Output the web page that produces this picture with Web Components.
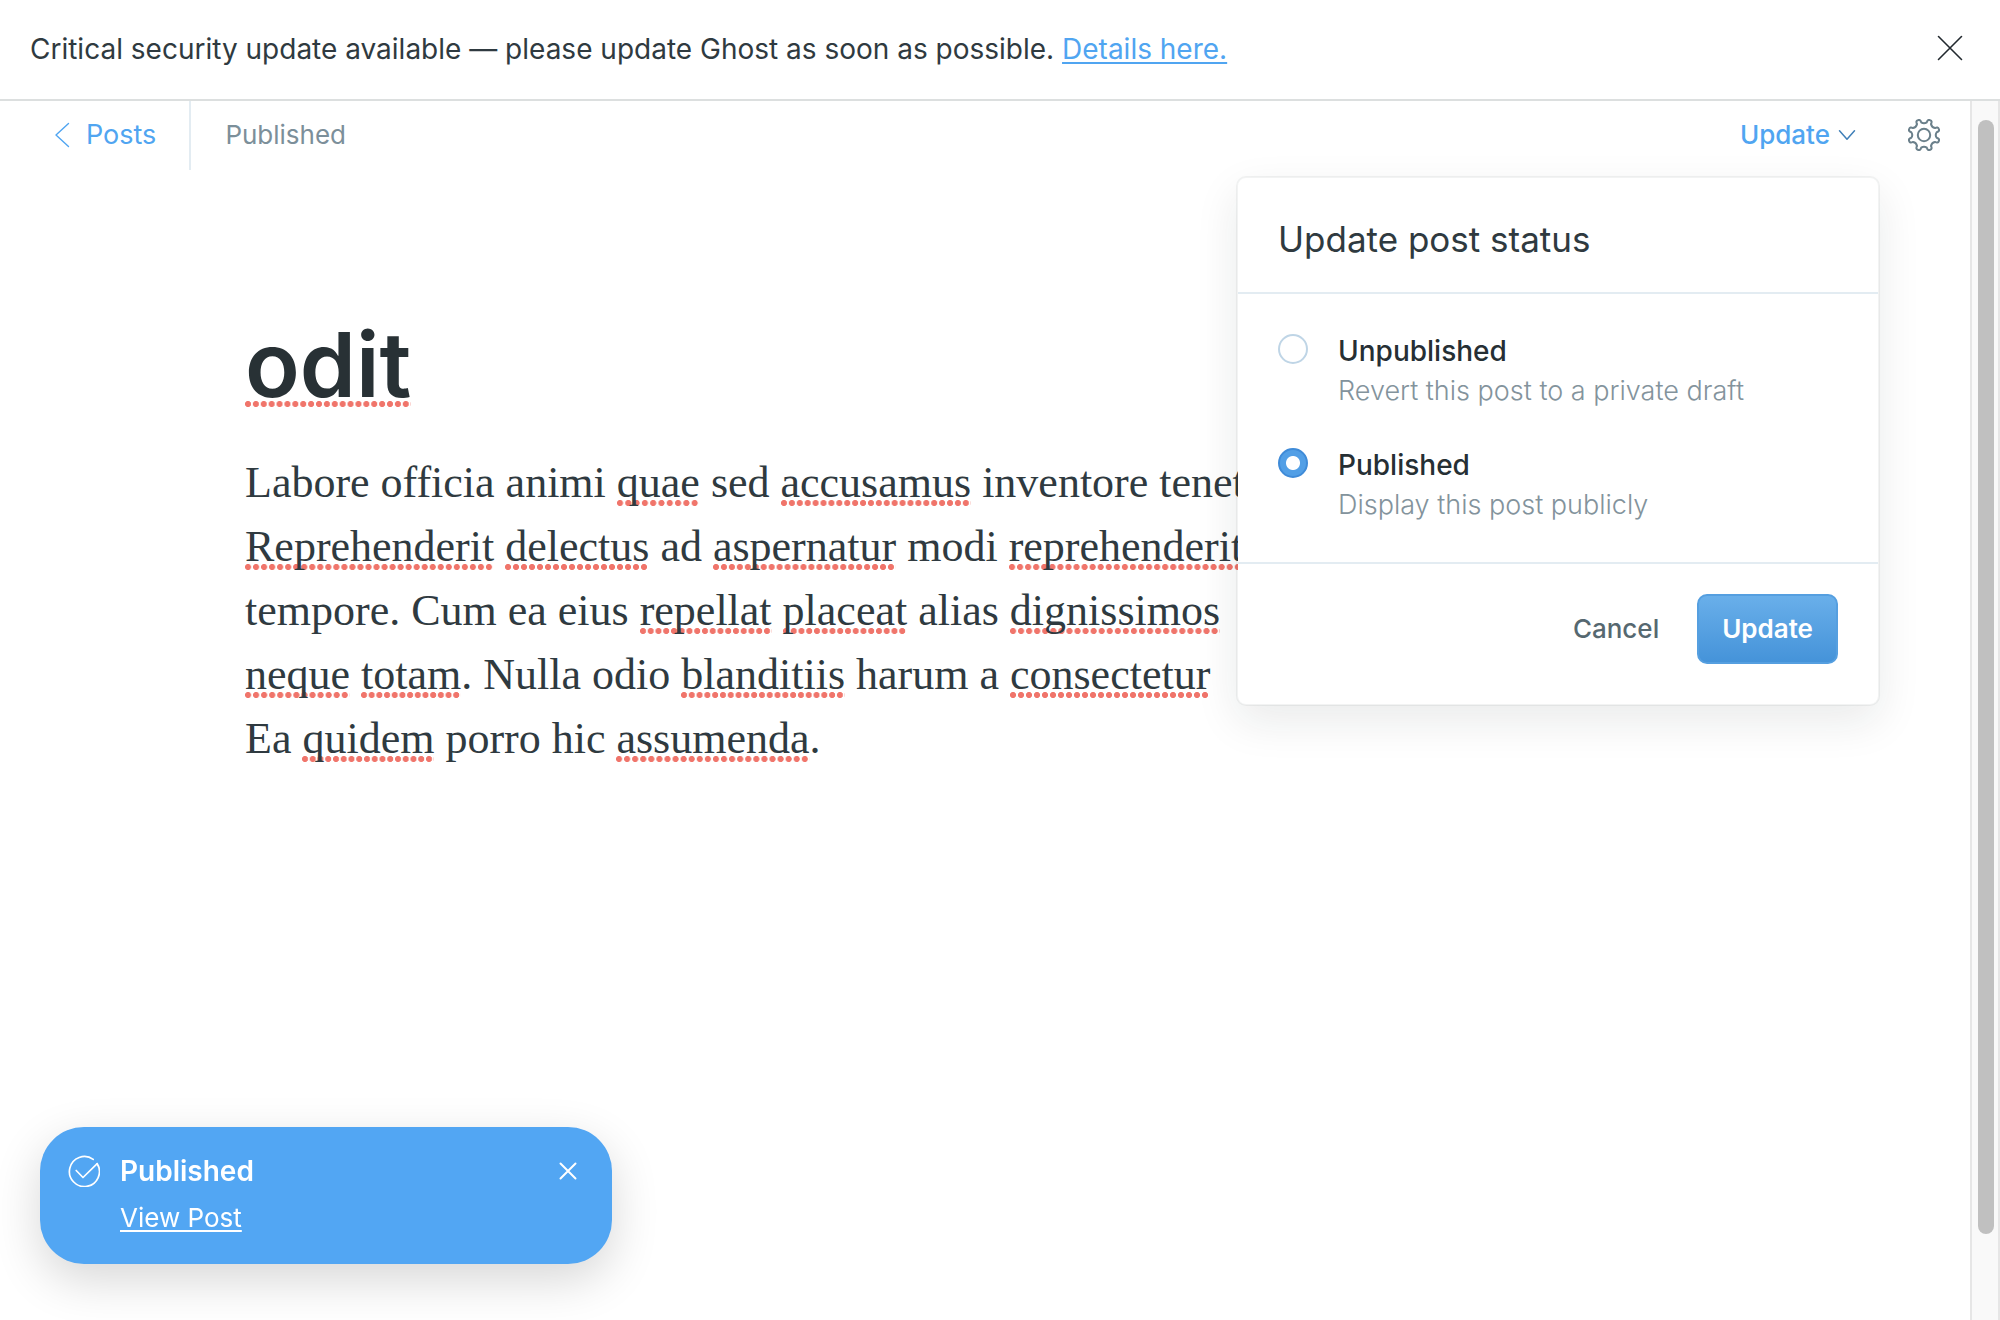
<!DOCTYPE html>
<html lang="en">
<head>
<meta charset="utf-8">
<title>Editor - Ghost</title>
<style>
  html, body { height: 100%; }
  body {
    margin: 0;
    overflow: hidden;
    background: #fff;
    color: #2f3a40;
    font-family: Inter, "Liberation Sans", sans-serif;
    font-size: 26px;
    line-height: 32px;
    --blue: #50a5f1;
    --rule: #e3ecf2;
  }
</style>
</head>
<body>
<ghost-app></ghost-app>

<script>
const define = (name, html, setup) => {
  const template = document.createElement('template');
  template.innerHTML = html.trim();
  customElements.define(name, class extends HTMLElement {
    constructor() {
      super();
      this.attachShadow({ mode: 'open' }).append(template.content.cloneNode(true));
      if (setup) setup(this);
    }
  });
};

define('update-banner', `
  <style>
    :host { display: flex; align-items: center; justify-content: space-between; flex: none; box-sizing: border-box;
      padding: 0 36px 2px 30px; height: 101px; border-bottom: 2px solid #dcdfdf; font-size: 28px; }
    p { margin: 0; }
    button { display: flex; padding: 0 0 2px; border: 0; background: none; color: #22292f; }
  </style>
  <p><slot></slot></p>
  <button type="button" aria-label="Dismiss"><svg width="28" height="28" viewBox="0 0 28 28" fill="none" stroke="currentColor" stroke-width="1.6" stroke-linecap="round"><path d="M2.500 2.500l23 23M25.500 2.500l-23 23"/></svg></button>
`);

define('scroll-rail', `
  <style>
    :host { display: flex; flex: none; box-sizing: border-box; width: 30px; padding: 19px 4px 86px 6px;
      background: #f9f9f9; border: solid #e6e6e6; border-width: 0 2px; }
    i { flex: 1; border-radius: 8px; background: #c0c0c0; }
  </style>
  <i></i>
`);

define('spell-mark', `<style>
    :host { display: inline;
      background: radial-gradient(circle at 3px 3px, #f0756b 2.7px, transparent 3.4px) left bottom var(--mark-offset, 1px) / 8px 6px round no-repeat; }
  </style><slot></slot>`);

define('status-menu', `
  <style>
    :host { display: block; box-sizing: border-box; width: 644px; background: #fff; background-clip: padding-box;
      border: 2px solid rgba(30, 50, 50, .06); border-radius: 10px; box-shadow: 0 16px 44px rgba(20, 30, 30, .09); }
    h2 { margin: 0; padding: 40px 40px 32px; font-size: 35px; line-height: 42px; font-weight: 400; border-bottom: 2px solid var(--rule); }
    fieldset { display: flex; flex-direction: column; gap: 34px; margin: 0; padding: 38px 40px 36px; border: 0; min-width: 0; }
    .option { display: grid; grid-template-columns: 30px 1fr; column-gap: 30px; }
    input { appearance: none; box-sizing: border-box; width: 30px; height: 30px; margin: 2px 0 0; border: 2px solid #bfd5e6; border-radius: 50%; background: #fff; }
    input:checked { border-color: #3f8bd8; background: radial-gradient(circle, #fff 6.5px, #529fe6 7.5px); }
    label { font-size: 28px; line-height: 38px; font-weight: 500; color: #262f34; }
    p { grid-column: 2; margin: 0; line-height: 42px; font-size: 27px; font-weight: 300; color: #83939c; }
    footer { display: flex; justify-content: flex-end; align-items: center; gap: 22px; padding: 30px 40px; padding-bottom: 40px; border-top: 2px solid var(--rule); }
    button { box-sizing: border-box; height: 70px; padding: 0 16px; border: 0; background: none; font: 500 26px/32px Inter, sans-serif; color: #566870; }
    .go { padding: 0 23px; border: 2px solid #559fe0; border-radius: 10px; color: #fff; font-weight: 600; background: linear-gradient(#69afea, #4593d9); }
  </style>
  <h2>Update post status</h2>
  <fieldset>
    <div class="option"><input type="radio" name="status" id="draft"><label for="draft">Unpublished</label><p>Revert this post to a private draft</p></div>
    <div class="option"><input type="radio" name="status" id="live" checked><label for="live">Published</label><p>Display this post publicly</p></div>
  </fieldset>
  <footer><button type="button">Cancel</button><button type="button" class="go">Update</button></footer>
`);

define('editor-header', `
  <style>
    :host { display: flex; align-items: stretch; flex: none; height: 69px; }
    a { display: flex; align-items: center; gap: 16px; padding: 0 33px 2px 54px; border-right: 2px solid var(--rule); color: var(--blue); font-size: 27px; text-decoration: none; }
    .state { display: flex; align-items: center; padding: 0 0 2px 34px; color: #7c8f9a; }
    .tools { display: flex; align-items: stretch; margin-left: auto; padding-right: 30px; }
    .menu { position: relative; display: flex; margin-right: 28px; }
    button { display: flex; align-items: center; gap: 8px; padding: 0 0 2px; border: 0; background: none; color: #6b808b; font: 500 26px/32px Inter, sans-serif; }
    .trigger { padding: 0 24px 2px 22px; color: var(--blue); }
    status-menu { position: absolute; top: calc(100% + 6px); right: 0; z-index: 2; }
  </style>
  <a href="#posts"><svg width="16" height="26" viewBox="0 0 16 26" fill="none" stroke="currentColor" stroke-width="1.4" stroke-linecap="round" stroke-linejoin="round"><path d="M14.500 1.500L2 13l12.500 11.500"/></svg>Posts</a>
  <span class="state">Published</span>
  <div class="tools">
    <div class="menu">
      <button type="button" class="trigger" aria-expanded="true">Update<svg width="18" height="12" viewBox="0 0 18 12" fill="none" stroke="#3f7fb8" stroke-width="1.5" stroke-linecap="round" stroke-linejoin="round"><path d="M1.500 1.800L9 10.300l7.500-8.500"/></svg></button>
      <status-menu></status-menu>
    </div>
    <button type="button" aria-label="Settings"><svg class="gear" width="32" height="32" viewBox="0 0 32 32" fill="none" stroke="currentColor" stroke-width="2" stroke-linejoin="round"><circle cx="16" cy="16" r="6.200"/><path/></svg></button>
  </div>
`, host => {
  // Eight rounded teeth, one every 45 degrees, joined by shallow valleys.
  const pt = (deg, r) => {
    const a = deg * Math.PI / 180;
    return (16 + r * Math.cos(a)).toFixed(2) + ' ' + (16 + r * Math.sin(a)).toFixed(2);
  };
  let d = '';
  for (let i = 0; i < 8; i++) {
    const t = 22.5 + i * 45;
    d += (i ? 'L' : 'M') + pt(t - 10, 13) + 'Q' + pt(t - 9, 16.4) + ' ' + pt(t, 16)
      + 'Q' + pt(t + 9, 16.4) + ' ' + pt(t + 10, 13)
      + 'Q' + pt(t + 22.5, 10.8) + ' ' + pt(t + 35, 13);
  }
  host.shadowRoot.querySelector('.gear path').setAttribute('d', d + 'Z');
});

define('post-canvas', `
  <style>
    :host { display: block; box-sizing: border-box; width: 100%; max-width: 1480px; margin: 0 auto; padding-top: 145px; white-space: nowrap; }
    h1 { margin: 0 0 36px; font-size: 90px; line-height: 100px; font-weight: 600; color: #283135; --mark-offset: 12px; }
    p { margin: 0; font: 44px/64px Georgia, "Liberation Serif", serif; }
  </style>
  <h1><spell-mark>odit</spell-mark></h1>
  <p>Labore officia animi <spell-mark>quae</spell-mark> sed <spell-mark>accusamus</spell-mark> inventore tenetur.<br>
  <spell-mark>Reprehenderit</spell-mark> <spell-mark>delectus</spell-mark> ad <spell-mark>aspernatur</spell-mark> modi <spell-mark>reprehenderit</spell-mark><br>
  tempore. Cum ea eius <spell-mark>repellat</spell-mark> <spell-mark>placeat</spell-mark> alias <spell-mark>dignissimos</spell-mark><br>
  <spell-mark>neque</spell-mark> <spell-mark>totam</spell-mark>. Nulla odio <spell-mark>blanditiis</spell-mark> harum a <spell-mark>consectetur</spell-mark><br>
  Ea <spell-mark>quidem</spell-mark> porro hic <spell-mark>assumenda</spell-mark>.</p>
`);

define('toast-note', `
  <style>
    :host { display: grid; grid-template-columns: 32px 1fr auto; column-gap: 20px; align-items: center; box-sizing: border-box;
      width: 572px; padding: 26px 34px 28px 28px; border-radius: 44px; background: #52a6f3; color: #fff; box-shadow: 0 16px 48px rgba(0, 0, 0, .16); }
    strong { font-size: 28px; line-height: 36px; font-weight: 600; }
    a { grid-column: 2; padding-top: 11px; line-height: 36px; color: inherit; text-decoration-thickness: 2px; text-underline-offset: 3px; }
    button { display: flex; padding: 0; border: 0; background: none; color: inherit; }
  </style>
  <svg width="32" height="32" viewBox="0 0 32 32" fill="none" stroke="currentColor" stroke-width="1.7" stroke-linecap="round" stroke-linejoin="round"><path d="M25.200 4.400A15 15 0 1 0 29.200 8.700"/><path d="M8.200 15.500l6.800 7L29.200 8.700"/></svg>
  <strong>Published</strong>
  <button type="button" aria-label="Close"><svg width="20" height="20" viewBox="0 0 20 20" fill="none" stroke="currentColor" stroke-width="2" stroke-linecap="round"><path d="M2.500 2.500l15 15M17.500 2.500l-15 15"/></svg></button>
  <a href="#view">View Post</a>
`);

define('ghost-app', `
  <style>
    :host { display: flex; flex-direction: column; height: 100%; }
    .body { display: flex; flex: 1; min-height: 0; }
    main { display: flex; flex-direction: column; flex: 1; min-width: 0; }
    update-banner a { color: var(--blue); text-decoration-thickness: 2px; text-underline-offset: 3px; }
    toast-note { position: fixed; left: 40px; bottom: 56px; z-index: 3; }
  </style>
  <update-banner>Critical security update available — please update Ghost as soon as possible. <a href="#details">Details here.</a></update-banner>
  <div class="body">
    <main>
      <editor-header></editor-header>
      <post-canvas></post-canvas>
    </main>
    <scroll-rail></scroll-rail>
  </div>
  <toast-note role="status"></toast-note>
`);
</script>
</body>
</html>
